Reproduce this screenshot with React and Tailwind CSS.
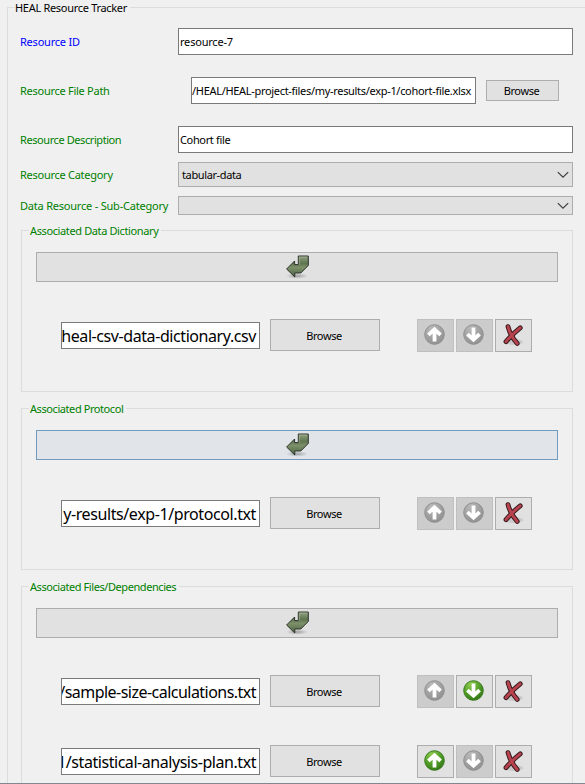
const FONT = 'font-["Noto_Sans","Open_Sans",sans-serif]';

function GroupTitle({ children, className = '' }) {
  return (
    <span className={`absolute -top-2 left-[7px] h-4 bg-[#f0f0f0] pr-[3px] leading-4 whitespace-nowrap ${className}`}>
      {children}
    </span>
  );
}

function Label({ children, className = '' }) {
  return <span className={`shrink-0 whitespace-nowrap leading-4 text-[#008000] ${className}`}>{children}</span>;
}

function TextField({ value, className = '', end = false, textClass = '' }) {
  return (
    <div
      className={`flex h-[27px] shrink-0 items-center overflow-hidden border border-[#7a7a7a] bg-white text-black ${
        end ? 'justify-end pr-[3px]' : 'pl-px'
      } ${className}`}
    >
      <span className={`whitespace-nowrap ${textClass}`}>{value}</span>
    </div>
  );
}

function Browse({ className = '' }) {
  return (
    <button
      className={`flex shrink-0 items-center justify-center border border-[#adadad] bg-[#e1e1e1] pr-[2px] leading-4 text-black ${className}`}
    >
      <span className="tracking-[-0.4px]">Browse</span>
    </button>
  );
}

function Combo({ value = '', className = '' }) {
  return (
    <div
      className={`flex w-[395px] items-center justify-between border border-[#adadad] bg-[#e1e1e1] pr-[3px] pl-[3px] text-black ${className}`}
    >
      <span className="pt-px tracking-[-0.38px]">{value}</span>
      <svg width="12" height="8" viewBox="0 0 12 8" fill="none" stroke="#3c3c3c" strokeWidth="1.15">
        <path d="M0.8 1.2 L6 6.2 L11.2 1.2" />
      </svg>
    </div>
  );
}

function ReturnBar({ active = false }) {
  return (
    <button
      className={`flex h-[30px] w-[522px] items-center justify-center border ${
        active ? 'border-[#6d9cbe] bg-[#e1e5ea]' : 'border-[#adadad] bg-[#e1e1e1]'
      }`}
    >
      <svg width="24" height="24" viewBox="0 0 24 24">
        <defs>
          <linearGradient id="leaf" x1="0" y1="0" x2="0" y2="1">
            <stop offset="0" stopColor="#91a280" />
            <stop offset="0.35" stopColor="#5f7550" />
            <stop offset="0.55" stopColor="#7c9069" />
            <stop offset="1" stopColor="#4a6040" />
          </linearGradient>
          <radialGradient id="shade">
            <stop offset="0" stopColor="#000" stopOpacity="0.3" />
            <stop offset="1" stopColor="#000" stopOpacity="0" />
          </radialGradient>
        </defs>
        <ellipse cx="12" cy="21" rx="11" ry="2.8" fill="url(#shade)" />
        <path
          d="M1.6 14 L9.6 6 V9.6 H13.3 V1 H23.3 V10.4 L15.8 18 H9.8 V22 Z"
          fill="url(#leaf)"
          stroke="#2c332a"
          strokeWidth="1"
          strokeLinejoin="round"
        />
        <path d="M14.3 9.8 V2 H22.3" fill="none" stroke="#b9c6ac" strokeWidth="0.7" opacity="0.7" />
      </svg>
    </button>
  );
}

function ArrowButton({ down = false, enabled = false }) {
  return (
    <button
      className={`flex h-[33px] w-[37px] items-center justify-center border pr-[2px] pb-[2px] ${
        enabled ? 'border-[#adadad] bg-[#e1e1e1]' : 'border-[#bfbfbf] bg-[#cccccc]'
      }`}
    >
      <svg width="21" height="21" viewBox="0 0 21 21">
        <defs>
          <radialGradient id="green" cx="0.35" cy="0.2" r="0.9">
            <stop offset="0" stopColor="#8fc94f" />
            <stop offset="0.5" stopColor="#55a02a" />
            <stop offset="1" stopColor="#2c6e12" />
          </radialGradient>
          <radialGradient id="gray" cx="0.35" cy="0.2" r="0.9">
            <stop offset="0" stopColor="#b9b9b9" />
            <stop offset="0.5" stopColor="#a2a2a2" />
            <stop offset="1" stopColor="#8e8e8e" />
          </radialGradient>
        </defs>
        <circle
          cx="10.5"
          cy="10.5"
          r="9.8"
          fill={enabled ? 'url(#green)' : 'url(#gray)'}
          stroke={enabled ? '#3a7d20' : '#909090'}
          strokeWidth="1"
        />
        <path
          d="M10.5 17.6 V6 M4.4 10.9 L10.5 5.4 L16.6 10.9"
          transform={down ? 'rotate(180 10.5 10.5)' : undefined}
          fill="none"
          stroke="#fff"
          strokeWidth="3.8"
        />
      </svg>
    </button>
  );
}

function RemoveButton() {
  return (
    <button className="flex h-[33px] w-[37px] items-center justify-center border border-[#adadad] bg-[#e1e1e1] pr-px pb-px">
      <svg width="22" height="24" viewBox="0 0 22 24" fill="none" strokeLinecap="round" strokeLinejoin="round">
        <ellipse cx="12" cy="19" rx="9" ry="3" fill="#000" opacity="0.1" />
        <g stroke="#33191c" strokeWidth="4.8">
          <path d="M6 3.6 Q8.4 13 15.2 20.4" />
          <path d="M18.2 4.8 Q10.4 11 4 18.6" />
        </g>
        <g stroke="#b8434f" strokeWidth="2.9">
          <path d="M6 3.6 Q8.4 13 15.2 20.4" />
          <path d="M18.2 4.8 Q10.4 11 4 18.6" />
        </g>
      </svg>
    </button>
  );
}

function FileRow({ value, textClass, up = false, down = false }) {
  return (
    <div className="flex h-[33px] items-start pl-[25px]">
      <TextField value={value} end className="mt-[3px] w-[199px] text-[16px]" textClass={textClass} />
      <Browse className="ml-[10px] h-8 w-[110px] pt-px" />
      <div className="ml-[37px] flex gap-[2px]">
        <ArrowButton enabled={up} />
        <ArrowButton down enabled={down} />
        <RemoveButton />
      </div>
    </div>
  );
}

function Group({ title, titleClass, active, className = '', children }) {
  return (
    <section className={`relative ml-[13px] w-[552px] border border-[#dcdcdc] pt-[21px] pl-[14px] ${className}`}>
      <GroupTitle className={`pl-px text-[#008000] ${titleClass}`}>{title}</GroupTitle>
      <ReturnBar active={active} />
      <div className="mt-[37px] flex flex-col gap-[37px]">{children}</div>
    </section>
  );
}

export default function App() {
  return (
    <div className={`h-[784px] w-[585px] overflow-hidden border-b border-[#828790] bg-[#f0f0f0] pt-[7px] pl-[7px] text-[11px] ${FONT}`}>
      <main className="relative h-[800px] w-[600px] border border-[#dcdcdc]">
        <GroupTitle className="text-black tracking-[-0.3px]">HEAL Resource Tracker</GroupTitle>

        <div className="mt-5 flex items-center pl-3">
          <Label className="w-[158px] text-[#0000ff]! tracking-[-0.22px]">Resource ID</Label>
          <TextField value="resource-7" className="w-[395px] pt-px" textClass="tracking-[-0.2px]" />
        </div>
        <div className="mt-[22px] flex items-center pl-3">
          <Label className="w-[171px] tracking-[-0.27px]">Resource File Path</Label>
          <TextField
            value="/HEAL/HEAL-project-files/my-results/exp-1/cohort-file.xlsx"
            end
            className="w-[285px] pt-px pr-[4px]!"
            textClass="tracking-[-0.31px]"
          />
          <Browse className="ml-[10px] h-[21px] w-[73px]" />
        </div>
        <div className="mt-[22px] flex items-center pl-3">
          <Label className="w-[158px] tracking-[-0.42px]">Resource Description</Label>
          <TextField value="Cohort file" className="w-[395px] pt-px" textClass="tracking-[-0.35px]" />
        </div>
        <div className="mt-[9px] flex items-center pl-3">
          <Label className="w-[158px] tracking-[-0.27px]">Resource Category</Label>
          <Combo value="tabular-data" className="h-[25px]" />
        </div>
        <div className="mt-[9px] flex h-[19px] items-center pl-3">
          <Label className="w-[158px] tracking-[-0.21px]">Data Resource - Sub-Category</Label>
          <Combo className="h-[19px]" />
        </div>

        <Group title="Associated Data Dictionary" titleClass="tracking-[-0.38px]" className="mt-[15px] h-[162px]">
          <FileRow value="heal-csv-data-dictionary.csv" textClass="tracking-[-0.42px]" />
        </Group>
        <Group title="Associated Protocol" titleClass="tracking-[-0.42px]" active className="mt-4 h-[162px]">
          <FileRow value="y-results/exp-1/protocol.txt" textClass="tracking-[-0.4px]" />
        </Group>
        <Group title="Associated Files/Dependencies" titleClass="tracking-[-0.43px]" className="mt-4 h-[220px]">
          <FileRow value="/sample-size-calculations.txt" textClass="tracking-[-0.53px]" down />
          <FileRow value="1/statistical-analysis-plan.txt" textClass="tracking-[-0.45px]" up />
        </Group>
      </main>
    </div>
  );
}
